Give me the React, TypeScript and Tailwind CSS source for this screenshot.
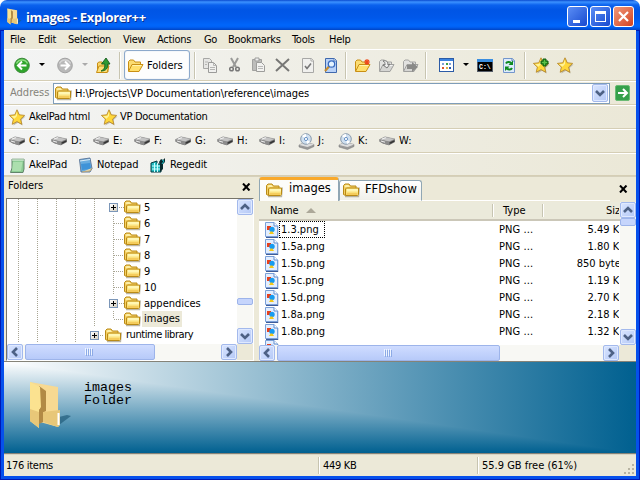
import React from 'react';

const ui = "font-['DejaVu_Sans_Condensed','DejaVu_Sans',sans-serif] [font-stretch:condensed]";
const wide = "font-['DejaVu_Sans',sans-serif] [font-stretch:normal]";

function Folder({ s = 17 }: { s?: number }) {
  return (
    <svg width={s} height={s} viewBox="0 0 17 17" className="shrink-0">
      <path d="M2 14.5h13.5l.8-9" fill="none" stroke="#8d8468" strokeWidth="1.3" opacity=".6" />
      <path d="M.5 12.500V3.500L2 2h4l1.500 2H13v9H1z" fill="#f5cf63" stroke="#b98a16" />
      <path d="M1.500 4L3 3h2.500L7 5H2z" fill="#fdf0a8" />
      <path d="M3.500 6h12v6.500l-1 1h-12V7z" fill="#fbe27c" stroke="#b98a16" />
      <path d="M4 7h11v2.500H4z" fill="#fff7b4" />
      <path d="M4 11h10.500v2H3z" fill="#f5cc5c" />
    </svg>
  );
}

function OpenFolder({ gray = false, children }: { gray?: boolean; children?: React.ReactNode }) {
  return (
    <svg width="17" height="17" viewBox="0 0 17 17" className="shrink-0">
      <path d="M1.5 14V4.5L3 3h3.5L8 5h5.5v3" fill={gray ? '#e2e2e0' : '#fbdc72'} stroke={gray ? '#a5a5a3' : '#c98f14'} />
      <path d="M1.5 14.5L5 7.5h11L12 14.5z" fill={gray ? '#d5d5d3' : '#ffdf6c'} stroke={gray ? '#a0a09e' : '#c98f14'} />
      <path d="M5.5 8.5h9" stroke={gray ? '#f3f3f3' : '#fff4b0'} />
      {children}
    </svg>
  );
}

function Star({ plus = false }: { plus?: boolean }) {
  return (
    <svg width="17" height="17" viewBox="0 0 17 17" className="shrink-0">
      <path d="M9 2l2.3 5 5.2.6-4 3.5 1.2 5.4L9 13.8 4.3 16.5 5.500 11.100 1.500 7.600 6.700 7z" fill="#8c846b" opacity=".5" />
      <path d="M8 .8l2.200 5 5.400.6-4 3.700 1.200 5.200L8 12.600l-4.800 2.700 1.200-5.200-4-3.700 5.400-.6z" fill="#ffd83a" stroke="#b98a2c" strokeWidth=".9" />
      <path d="M8 2.500L6.500 6.700 2 7.200l3.500 2.500L8 7z" fill="#fff39a" />
      {plus && <path d="M8 4h2V2h3v2h2v3h-2v2h-3V7H8z" fill="#2d9b28" stroke="#105f10" strokeWidth="1" />}
      {plus && <path d="M9 5.500h5M11.500 3v5" stroke="#5cc048" />}
    </svg>
  );
}

function Round({ gray = false }: { gray?: boolean }) {
  return (
    <svg width="17" height="17" viewBox="0 0 17 17" className="shrink-0">
      <circle cx="8" cy="8.500" r="7.300" fill={gray ? '#b8b8b8' : '#2ea52b'} stroke={gray ? '#a2a2a2' : '#3c8a3a'} />
      <path d="M2.500 6.500a6 6 0 0 1 11 0" stroke={gray ? '#d4d4d4' : '#8edc82'} fill="none" strokeWidth="1.500" />
      <path d={gray ? 'M3.500 8.500h8M8 4.500l4 4-4 4' : 'M12.500 8.500h-8M8 4.500l-4 4 4 4'} stroke="#fff" strokeWidth="2" fill="none" />
    </svg>
  );
}

function Up() {
  return (
    <svg width="17" height="17" viewBox="0 0 17 17" className="-ml-px">
      <path d="M2.500 15V6l1.500-1h3l1 1.500h5V15z" fill="#f9d569" stroke="#c98f14" />
      <path d="M1.500 15.500L4 9h10l-2 6.500z" fill="#ffe27a" stroke="#c98f14" />
      <path d="M6 14c3.500-1.500 4-4 3.800-7H6.500L11 1l4 6h-2.200c.2 4-1.500 7-6.800 7z" fill="#2f9a34" stroke="#145c1c" strokeWidth=".9" />
    </svg>
  );
}

function Copy() {
  return (
    <svg width="16" height="17" viewBox="0 0 16 17" className="-ml-px">
      <path d="M1.500 1.500h6l2 2v8h-8z" fill="#e6e6e4" stroke="#a7a7a5" />
      <path d="M6.500 5.500h5l3 3v7h-8z" fill="#f0f0ee" stroke="#9b9b99" />
      <path d="M11.500 5.500v3h3M8 10.500h5M8 12.500h5M3 5h3M3 7.500h2" stroke="#b5b5b3" fill="none" />
    </svg>
  );
}

function Cut() {
  return (
    <svg width="12" height="16" viewBox="0 0 12 16">
      <path d="M2 1l5 9M9 1L4 10" stroke="#9a9a98" strokeWidth="2" />
      <circle cx="2.500" cy="12" r="1.800" fill="none" stroke="#777" strokeWidth="1.500" />
      <circle cx="8.500" cy="12" r="1.800" fill="none" stroke="#777" strokeWidth="1.500" />
    </svg>
  );
}

function Paste() {
  return (
    <svg width="15" height="16" viewBox="0 0 15 16">
      <path d="M1.500 2.500h9v11h-9z" fill="#bdbdbb" stroke="#a1a19f" />
      <path d="M4 1h4v3H4z" fill="#eee" stroke="#9d9d9b" />
      <path d="M5.500 5.500h5l3 3v6h-8z" fill="#f2f2f0" stroke="#9d9d9b" />
      <path d="M7 9.500h5M7 11.500h5" stroke="#b9b9b7" />
    </svg>
  );
}

function Page({ kind }: { kind: 'check' | 'search' | 'refresh' }) {
  const blue = kind !== 'check';
  return (
    <svg width="15" height="17" viewBox="0 0 15 17">
      <path d="M1.500 1.500h9l2 2v12h-11z" fill={kind === 'search' ? '#b9d2f8' : blue ? '#deebfc' : '#f0f0ee'} stroke={kind === 'search' ? '#3f68ad' : blue ? '#7396cc' : '#a8a8a6'} />
      <path d="M10 1.500v2.500h2.500" fill="#fff" stroke={blue ? '#5a80bd' : '#a8a8a6'} />
      {kind === 'check' && <path d="M4 9l2 2.500 4-5" stroke="#777" strokeWidth="1.600" fill="none" />}
      {kind === 'search' && (
        <g>
          <path d="M5 9.500L1 14" stroke="#c98d2c" strokeWidth="2.200" />
          <circle cx="7.500" cy="7" r="3.200" fill="#e5f4ff" stroke="#3a6cc0" strokeWidth="1.300" />
        </g>
      )}
      {kind === 'refresh' && (
        <g fill="none" stroke="#0e8a20" strokeWidth="2">
          <path d="M4 6.500c1-2 3.500-2 5-.5M10 11c-1 2-3.500 2-5 .5" />
          <path d="M6.500 8H11V3.500zM7.500 9.500H3V14z" fill="#0e8a20" stroke="none" />
        </g>
      )}
    </svg>
  );
}

function Drive() {
  return (
    <svg width="17" height="10" viewBox="0 0 17 10" className="shrink-0">
      <path d="M.5 3.500L6 .8l10 2.200v3L10 9.300 4 7.500.5 5.500z" fill="#6a6a6a" />
      <path d="M.5 3.500L6 .8l10 2.200-6 2.800z" fill="#c4c4c4" stroke="#9a9a9a" strokeWidth=".5" />
      <path d="M.5 3.500l9.500 2.300v3.400L4 7.500.5 5.500z" fill="#8c8c8c" />
      <path d="M2 5l4 1.200" stroke="#eee" />
      <path d="M3 3l4-1.300" stroke="#f2f2f2" />
      <path d="M11 7.200l4-2" stroke="#333" strokeWidth="1.300" />
    </svg>
  );
}

function Disc() {
  return (
    <svg width="17" height="17" viewBox="0 0 17 17" className="shrink-0">
      <path d="M1 12l6-3 9 2.500v2L9.500 16.500 1 14z" fill="#999" stroke="#777" strokeWidth=".5" />
      <path d="M1 12l6-3 9 2.500-6.500 2.500z" fill="#ddd" />
      <circle cx="8" cy="6" r="5.300" fill="#cfdfef" stroke="#8b9cae" />
      <path d="M8 6l-4-3a5 5 0 0 1 4-2zM8 6l4 3a5 5 0 0 1-3 2z" fill="#fff" />
      <circle cx="8" cy="6" r="1.600" fill="#fff" stroke="#6a94c7" />
    </svg>
  );
}

function Png() {
  return (
    <svg width="14" height="16" viewBox="0 0 14 16" className="shrink-0">
      <path d="M12.500 4v11.500H1" stroke="#3f5c98" strokeWidth="1.400" fill="none" />
      <path d="M.5.5H9L12.500 4v10.500H.5z" fill="#e3eeff" stroke="#7ba0d8" />
      <path d="M9 .5V4h3.500" fill="#fff" stroke="#5f8cd0" />
      <path d="M2 4h4v4H2z" fill="#e8401c" />
      <circle cx="7" cy="7.500" r="2.700" fill="#179bf0" />
      <path d="M4 12l1.500-2.500h2L9 12z" fill="#f3c719" />
    </svg>
  );
}

function BigFolder({ w, h }: { w: number; h: number }) {
  return (
    <svg width={w} height={h} viewBox="0 0 43 48" className="shrink-0">
      <path d="M30 44l12-9-4-1-8 2z" fill="#1d5877" opacity=".65" />
      <path d="M1 1l28 5v24l2 1v13l-2 2-18-5z" fill="#f7d992" />
      <path d="M10 5l7 5v20l-6 3z" fill="#b28a45" />
      <path d="M1 1l10 5 1 20-2 3v18L1 40z" fill="#fbe290" />
      <path d="M1 28l9 3v16l-9-7zM14 31l17-2v14l-2 3-15-5z" fill="#e8c778" />
      <path d="M10 28l4 2v11l-4 2z" fill="#b28a45" />
      <path d="M28.500 32h2v12h-2z" fill="#fff" />
    </svg>
  );
}

const chevrons = { up: 'M4 10l4-4 4 4', down: 'M4 6l4 4 4-4', left: 'M10 4L6 8l4 4', right: 'M6 4l4 4-4 4' };

function SBtn({ dir, h = 'h-4' }: { dir: keyof typeof chevrons; h?: string }) {
  return (
    <div className={`${h} w-4 shrink-0 rounded-[2px] border border-[#a3b9ec] bg-linear-to-br from-[#d9e5ff] to-[#b4c8f6] shadow-[inset_0_0_0_1px_#dfe9ff] flex items-center justify-center`}>
      <svg width="16" height="16" viewBox="0 0 16 16" className="shrink-0">
        <path d={chevrons[dir]} stroke="#4d6185" strokeWidth="2.600" fill="none" />
      </svg>
    </div>
  );
}

function Grip() {
  return (
    <div className="flex">
      {[0, 1, 2, 3].map((i) => (
        <div key={i} className="mr-px h-[7px] w-px bg-[#8caae6] shadow-[-1px_-1px_0_#eef4ff]" />
      ))}
    </div>
  );
}

function Sep() {
  return <div className="h-[27px] w-[2px] shrink-0 border-l border-[#c8c5b1] bg-white" />;
}

function Caret({ c = 'border-t-black' }: { c?: string }) {
  return <div className={`-mt-[2px] h-0 w-0 border-x-[3px] border-t-[3px] border-x-transparent ${c}`} />;
}

function Cell({ w, children }: { w: string; children?: React.ReactNode }) {
  return <div className={`${w} flex h-full shrink-0 items-center`}>{children}</div>;
}

const menu: [string, string][] = [
  ['File', 'w-[28px]'], ['Edit', 'w-[30px]'], ['Selection', 'w-[55px]'], ['View', 'w-[34px]'], ['Actions', 'w-[47px]'],
  ['Go', 'w-[24px]'], ['Bookmarks', 'w-[64px]'], ['Tools', 'w-[37px]'], ['Help', 'w-[30px]'],
];
const drives: [string, string, boolean][] = [
  ['C:', 'w-[42px]', false], ['D:', 'w-[42px]', false], ['E:', 'w-[41px]', false], ['F:', 'w-[41px]', false], ['G:', 'w-[42px]', false],
  ['H:', 'w-[42px]', false], ['I:', 'w-[39px]', false], ['J:', 'w-[40px]', true], ['K:', 'w-[41px]', true], ['W:', 'w-[42px]', false],
];
const tree: [string, boolean][] = [
  ['5', true], ['6', false], ['7', false], ['8', false], ['9', false], ['10', false], ['appendices', true], ['images', false],
];
const files: [string, string][] = [
  ['1.3.png', '5.49 KB'], ['1.5a.png', '1.80 KB'], ['1.5b.png', '850 bytes'], ['1.5c.png', '1.19 KB'],
  ['1.5d.png', '2.70 KB'], ['1.8a.png', '2.18 KB'], ['1.8b.png', '1.32 KB'],
];

const bar = 'flex items-center border-t border-t-white border-b border-b-[#d5ceb5] bg-linear-to-r from-[#f3f4f4] to-[#ebe8d7] shrink-0';
const dotV = 'w-px shrink-0 bg-[repeating-linear-gradient(180deg,#a8a593_0_1px,transparent_1px_2px)]';
const dotH = 'h-px shrink-0 bg-[repeating-linear-gradient(90deg,#a8a593_0_1px,transparent_1px_2px)]';

function PlusBox() {
  return (
    <div className="flex h-[9px] w-[9px] shrink-0 items-center justify-center border border-[#7b96b8] bg-linear-to-br from-white to-[#d6d0c0]">
      <svg width="5" height="5" viewBox="0 0 5 5" shapeRendering="crispEdges"><path d="M0 2h5v1H0zM2 0h1v5H2z" /></svg>
    </div>
  );
}

function Title() {
  const b = 'flex h-[21px] w-[21px] items-center justify-center rounded-[3px] border border-white';
  return (
    <div className="flex h-[30px] shrink-0 items-center rounded-t-[7px] bg-[linear-gradient(180deg,#0a4bd0_0,#3c92ff_2px,#0b62ee_5px,#0055e5_10px,#0058ea_18px,#0066fb_25px,#0061f5_27px,#0044c4_30px)] pl-[7px] pr-[6px] pt-[3px]">
      <BigFolder w={15} h={17} />
      <div className="ml-[4px] grow whitespace-nowrap pt-px font-['Open_Sans','Noto_Sans',sans-serif] text-[13px] font-bold leading-4 tracking-[-0.35px] text-white [font-stretch:normal] [text-shadow:1px_1px_0_#0a2f8c]">images - Explorer++</div>
      <div className="flex gap-[2px]">
        <div className={`${b} bg-linear-to-br from-[#5b8df5] to-[#1848cf]`}><div className="mr-[3px] mt-[9px] h-[3px] w-[7px] bg-white" /></div>
        <div className={`${b} bg-linear-to-br from-[#5b8df5] to-[#1848cf]`}><div className="h-[11px] w-[11px] border border-t-[3px] border-white" /></div>
        <div className={`${b} bg-linear-to-br from-[#f0977a] to-[#d2401a]`}>
          <svg width="13" height="13" viewBox="0 0 13 13"><path d="M2 2l9 9M11 2l-9 9" stroke="#fff" strokeWidth="2.200" /></svg>
        </div>
      </div>
    </div>
  );
}

function Toolbar() {
  return (
    <div className={`${bar} h-[32px] pl-[10px]`}>
      <Cell w="w-[25px]"><Round /></Cell>
      <Cell w="w-[18px]"><Caret /></Cell>
      <Cell w="w-[25px]"><Round gray /></Cell>
      <Cell w="w-[14px]"><Caret c="border-t-[#aaa]" /></Cell>
      <Cell w="w-[23px]"><Up /></Cell>
      <Cell w="w-[5px]"><Sep /></Cell>
      <div className="mr-1 flex h-[30px] w-[66px] shrink-0 items-center rounded-[3px] border border-[#8da9cb] bg-[#fdfdfd] pl-[2px] shadow-[inset_0_0_1px_#a9bfda]">
        <OpenFolder /><span className="ml-[3px] pt-[3px]">Folders</span>
      </div>
      <Cell w="w-[9px]"><Sep /></Cell>
      <Cell w="w-[26px]"><Copy /></Cell>
      <Cell w="w-[22px]"><Cut /></Cell>
      <Cell w="w-[24px]"><Paste /></Cell>
      <Cell w="w-[26px]"><svg width="16" height="16" viewBox="0 0 16 16"><path d="M1 2l13 12M14 2L1 14" stroke="#777775" strokeWidth="2" /></svg></Cell>
      <Cell w="w-[23px]"><Page kind="check" /></Cell>
      <Cell w="w-[21px]"><Page kind="search" /></Cell>
      <Cell w="w-[9px]"><Sep /></Cell>
      <Cell w="w-[24px]"><OpenFolder><path d="M13 2v6M10 5h6M11 3l4 4M15 3l-4 4" stroke="#ee4a1c" strokeWidth="1.200" /></OpenFolder></Cell>
      <Cell w="w-[24px]"><OpenFolder gray><path d="M5 4c4-1 5 1 5 4l2-1-3 4-4-3h2c0-2 0-3-2-4z" fill="#eee" stroke="#777" /></OpenFolder></Cell>
      <Cell w="w-[23px]"><OpenFolder gray><path d="M5 8h5V5l6 5-6 5v-3H5z" fill="#8a8a88" /></OpenFolder></Cell>
      <Cell w="w-[14px]"><Sep /></Cell>
      <Cell w="w-[24px]">
        <svg width="16" height="14" viewBox="0 0 16 14" shapeRendering="crispEdges">
          <path d="M0 0h15v14H0z" fill="#2c5ba6" /><path d="M1 3h13v10H1z" fill="#fff" /><path d="M1 1h13v2H1z" fill="#3b83e0" />
          <path d="M3 5h2v2H3zM10 5h2v2h-2z" fill="#7ea3d8" /><path d="M7 5h2v2H7z" fill="#3aa046" /><path d="M3 9h2v2H3z" fill="#d9572c" /><path d="M7 9h2v2H7z" fill="#e2b341" /><path d="M10 9h2v2h-2z" fill="#2a58a6" />
        </svg>
      </Cell>
      <Cell w="w-[14px]"><Caret /></Cell>
      <Cell w="w-[25px]">
        <svg width="16" height="13" viewBox="0 0 16 13">
          <path d="M0 0h16v13H0z" fill="#555c68" /><path d="M0 0h16v3H0z" fill="#3b8ee0" /><path d="M1 3h14v9H1z" fill="#000" />
          <text x="2" y="9.500" fill="#fff" fontSize="6.500" fontWeight="bold" fontFamily="Liberation Mono, monospace">C:\</text>
        </svg>
      </Cell>
      <Cell w="w-[22px]"><Page kind="refresh" /></Cell>
      <Cell w="w-[9px]"><Sep /></Cell>
      <Cell w="w-[24px]"><Star plus /></Cell>
      <Cell w="w-[24px]"><Star /></Cell>
    </div>
  );
}

function TreePane() {
  return (
    <div className="flex w-[250px] shrink-0 flex-col">
      <div className="flex h-[21px] shrink-0 items-center pl-1 pr-[3px]">
        <span className="grow pb-[2px] tracking-[-0.1px]">Folders</span>
        <svg width="9" height="8" viewBox="0 0 9 8" className="-mt-px"><path d="M1 .5l6.500 7M7.500 .5L1 7.500" stroke="#000" strokeWidth="2" /></svg>
      </div>
      <div className="ml-[2px] flex h-[163px] flex-col border-b border-r border-b-white border-r-white border-l border-l-[#77746a] border-t border-t-[#77746a] bg-white">
        <div className="flex h-[145px]">
          <div className="flex w-[230px] overflow-hidden">
            <div className="flex h-[144px] gap-[18px] pl-[11px]">
              {[0, 1, 2, 3].map((i) => <div key={i} className={dotV} />)}
            </div>
            <div className="flex flex-col">
              <div className="flex">
                <div className="flex h-[128px] pl-[18px]"><div className={dotV} /></div>
                <div className="flex flex-col">
                  {tree.map(([name, plus], i) => (
                    <div key={name} className="flex h-4 items-center">
                      <div className={plus ? 'flex w-[29px] items-center pl-[14px]' : 'flex h-4 w-[29px] pl-[18px]'}>
                        {plus ? <><PlusBox /><div className={`${dotH} ml-px w-[5px]`} /></> : (
                          <><div className={`${dotV} ${i === 7 ? 'h-2' : 'h-4'}`} /><div className={`${dotH} mt-2 w-[9px]`} /></>
                        )}
                      </div>
                      <Folder />
                      <span className={`ml-px px-[2px] leading-[15px] ${i === 7 ? 'h-4 w-10 bg-[#ece9d8]' : 'ml-px'}`}>{name}</span>
                    </div>
                  ))}
                </div>
              </div>
              <div className="flex h-4 items-center pl-[14px]">
                <PlusBox /><div className={`${dotH} ml-px mr-px w-[4px]`} /><Folder />
                <span className="ml-1 whitespace-nowrap tracking-[-0.45px]">runtime library</span>
              </div>
            </div>
          </div>
          <div className="flex w-4 flex-col bg-[#f8f8f4]">
            <SBtn dir="up" />
            <div className="mt-[83px] h-[7px] rounded-[2px] border border-[#9db4ea] bg-[#c6d5fc]" />
            <div className="grow" />
            <SBtn dir="down" />
          </div>
        </div>
        <div className="flex h-4">
          <div className="flex w-[230px] bg-[#f8f8f4]">
            <SBtn dir="left" />
            <div className="ml-[2px] flex w-[130px] items-center justify-center rounded-[2px] border border-[#9db4ea] bg-linear-to-b from-[#cfdcff] to-[#b7caf9]"><Grip /></div>
            <div className="grow" />
            <SBtn dir="right" />
          </div>
          <div className="grow bg-[#ece9d8]" />
        </div>
      </div>
    </div>
  );
}

function ListPane() {
  return (
    <div className="ml-[5px] flex w-[377px] flex-col">
      <div className="-mt-px flex h-[25px] shrink-0 items-end">
        <div className="flex h-[24px] w-[80px] items-center rounded-t-[3px] border-x border-t-[3px] border-x-[#91a7b4] border-t-[#f9a92b] bg-[#fcfcfa] pb-px pl-[6px]">
          <Folder /><span className={`${wide} ml-[6px] pb-[2px] text-[11.5px]`}>images</span>
        </div>
        <div className="flex h-[21px] w-[83px] items-center rounded-t-[3px] border-x border-b border-t border-b-white border-x-[#91a7b4] border-t-[#91a7b4] bg-linear-to-b from-white to-[#f0f0ea] pl-[3px]">
          <Folder /><span className={`${wide} ml-[5px] pb-[2px] text-[11.5px]`}>FFDshow</span>
        </div>
        <div className="h-px w-[188px] bg-white" />
        <svg width="9" height="8" viewBox="0 0 9 8" className="mb-[8px] ml-[9px]"><path d="M1 .5l6.500 7M7.500 .5L1 7.500" stroke="#000" strokeWidth="2" /></svg>
      </div>
      <div className="mt-px flex h-[144px]">
        <div className="flex w-[361px] flex-col overflow-hidden bg-white">
          <div className="flex h-[19px] shrink-0 items-center border-b-2 border-b-[#cbc7b8] bg-[#ebeadb]">
            <span className="w-[47px] shrink-0 pl-[11px] pt-px tracking-[-0.2px]">Name</span>
            <div className="h-0 w-0 border-x-[5px] border-b-[5px] border-x-transparent border-b-[#aca899]" />
            <div className="ml-[176px] h-[13px] w-[2px] shrink-0 border-l border-[#c7c5b2] bg-white" />
            <span className="ml-[9px] w-[39px] shrink-0 pt-px">Type</span>
            <div className="h-[13px] w-[2px] shrink-0 border-l border-[#c7c5b2] bg-white" />
            <span className="ml-[62px] w-[13px] shrink-0 overflow-hidden pt-px">Size</span>
          </div>
          {files.map(([name, size], i) => (
            <div key={name} className="flex h-[17px] shrink-0 items-center whitespace-nowrap leading-[17px]">
              <div className="w-[20px] shrink-0 pl-[6px]"><Png /></div>
              <div className="w-[220px] shrink-0">
                <span className={`inline-block h-[17px] border border-dotted pl-px leading-[15px] ${i === 0 ? 'w-[46px] border-black' : 'border-transparent'}`}>{name}</span>
              </div>
              <span className="w-[50px] shrink-0 tracking-[0.1px]">PNG ...</span>
              <div className="flex w-[70px] shrink-0 overflow-hidden"><div className="flex w-[77px] shrink-0 justify-end"><span>{size}</span></div></div>
            </div>
          ))}
          <div className="h-[5px] shrink-0 overflow-hidden pl-[6px]"><Png /></div>
        </div>
        <div className="flex w-4 flex-col bg-[#f8f8f4]">
          <SBtn dir="up" />
          <div className="h-[8px] rounded-[2px] border border-[#9db4ea] bg-[#c6d5fc]" />
          <div className="grow" />
          <SBtn dir="down" />
        </div>
      </div>
      <div className="flex h-4 w-[360px] bg-[#f8f8f4]">
        <SBtn dir="left" />
        <div className="ml-[2px] flex w-[223px] items-center justify-center rounded-[2px] border border-[#9db4ea] bg-linear-to-b from-[#cfdcff] to-[#b7caf9]"><Grip /></div>
        <div className="grow" />
        <SBtn dir="right" />
      </div>
    </div>
  );
}

export default function App() {
  return (
    <div className={`${ui} flex h-[480px] w-[640px] flex-col overflow-hidden whitespace-nowrap bg-white text-[11px] text-black`}>
      <Title />
      <div className="flex h-[450px] flex-col border border-[#0019b4] bg-[#ece9d8]">
        <div className="flex h-[449px] flex-col border-x-[3px] border-b-[3px] border-[#0650ec]">
        <div className="-mt-px flex h-[19px] shrink-0 items-center bg-[#ece9d8] pl-[6px] pt-px tracking-[-0.3px]">
          {menu.map(([m, w]) => <span key={m} className={`${w} shrink-0`}>{m}</span>)}
        </div>
        <Toolbar />
        <div className={`${bar} h-[24px] pl-[6px]`}>
          <span className="w-[43px] text-[#85837a]">Address</span>
          <div className="flex h-[21px] w-[557px] items-center border border-[#7f9db9] bg-white pl-px pr-px">
            <Folder /><span className="ml-[3px] grow pt-[2px] tracking-[-0.1px]">H:\Projects\VP Documentation\reference\images</span>
            <SBtn dir="down" h="h-[18px]" />
          </div>
          <svg width="16" height="16" viewBox="0 0 16 16" className="ml-[5px]">
            <rect x=".5" y=".5" width="14" height="15" rx="1.500" fill="#36a04a" stroke="#6abb74" />
            <path d="M3 8h8M8 4l4 4-4 4" stroke="#fff" strokeWidth="2" fill="none" />
          </svg>
        </div>
        <div className={`${bar} h-[24px] pl-[5px] tracking-[-0.3px]`}>
          <Star /><span className="ml-[3px] w-[72px] pt-px">AkelPad html</span>
          <Star /><span className="ml-[2px] pt-px">VP Documentation</span>
        </div>
        <div className={`${bar} h-[24px] pl-[5px]`}>
          {drives.map(([d, w, cd]) => (
            <div key={d} className={`${w} flex shrink-0 items-center`}>{cd ? <Disc /> : <Drive />}<span className="ml-[3px] pt-px">{d}</span></div>
          ))}
        </div>
        <div className={`${bar} h-[23px] pl-[6px] tracking-[-0.1px]`}>
          <svg width="16" height="16" viewBox="0 0 16 16"><path d="M2 2h12v10l-1 3.500H.5L2 11z" fill="#8ccc94" stroke="#62856a" /><path d="M3 1v3M5 1v3M7 1v3M9 1v3M11 1v3M13 1v3" stroke="#e8f3e6" /><path d="M3 5h9.500L11 14H2z" fill="#acdfae" /></svg>
          <span className="ml-[3px] w-[50px] pt-[2px]">AkelPad</span>
          <svg width="15" height="16" viewBox="0 0 15 16"><path d="M.5 2.500L11 1l2 10.500-2 3.500H2z" fill="#68acdf" stroke="#637c9d" /><path d="M1 4l10-1.500" stroke="#d9eaf5" /><path d="M2 7l9-1 1 6-9 1z" fill="#3e93d8" /><path d="M3 15l8-1 2-3" fill="#e8dab0" stroke="#b8a478" /></svg>
          <span className="ml-[3px] w-[53px] pt-[2px]">Notepad</span>
          <svg width="16" height="16" viewBox="0 0 16 16"><path d="M1 6l6-2v3h4v8H1z" fill="#22b9c0" stroke="#063b40" /><path d="M2 9h8M2 12h8M4.500 6v9M7.500 6v9" stroke="#c9ffff" /><path d="M9 5l2-3 2 1 2-2v4l-2 2v5l-3 3V8z" fill="#08292c" /><path d="M12 3l2 1-2 3" stroke="#1dbcc5" fill="none" /></svg>
          <span className="ml-[4px] pt-[2px]">Regedit</span>
        </div>
        <div className="flex h-[185px] shrink-0 border-t border-[#d5d0bb]">
          <TreePane />
          <ListPane />
        </div>
        <div className="grid h-[93px] shrink-0 border-y border-y-[#858378] bg-[linear-gradient(180deg,#fff,#006090)] *:col-start-1 *:row-start-1">
          <div className="bg-[linear-gradient(90deg,#fff,#006090)] [clip-path:polygon(0_0,100%_0,100%_100%)]" />
          <div className="z-10 flex pl-[25px] pt-[19px]">
            <BigFolder w={43} h={48} />
            <div className="ml-[12px] flex flex-col font-['Liberation_Mono',monospace] text-[13.33px] leading-[13px]"><div>images</div><div>Folder</div></div>
          </div>
        </div>
        <div className="flex h-[22px] shrink-0 items-center border-t border-t-[#d8d5c4] pl-[2px]">
          <span className="w-[312px] pt-[2px] tracking-[-0.3px]">176 items</span>
          <div className="h-[17px] w-[2px] border-l border-[#c7c4b0] bg-white" />
          <span className="ml-[3px] w-[154px] pt-[2px] tracking-[-0.3px]">449 KB</span>
          <div className="h-[17px] w-[2px] border-l border-[#c7c4b0] bg-white" />
          <span className="ml-[3px] grow pt-[2px]">55.9 GB free (61%)</span>
          <svg width="13" height="13" viewBox="0 0 13 13" className="mt-[8px]" shapeRendering="crispEdges"><path d="M9 1h2v2H9zM5 5h2v2H5zM9 5h2v2H9zM1 9h2v2H1zM5 9h2v2H5zM9 9h2v2H9z" fill="#b8b4a2" /></svg>
        </div>
        </div>
      </div>
    </div>
  );
}
